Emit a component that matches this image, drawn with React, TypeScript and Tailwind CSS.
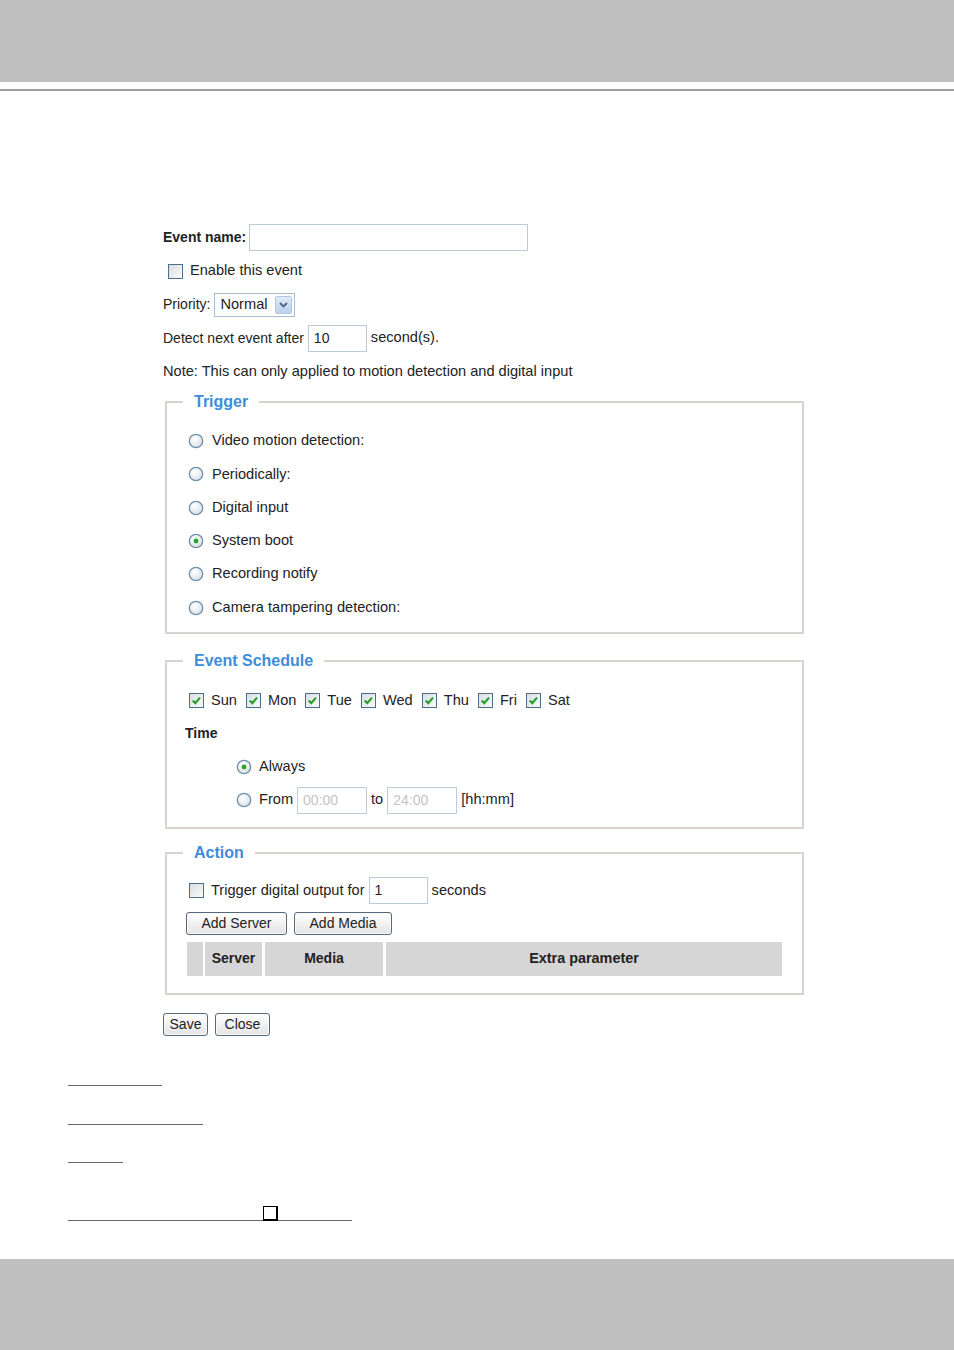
import React from "react";

const Checkbox = ({ checked = false }: { checked?: boolean }) => (
  <svg width="15" height="15" viewBox="0 0 15 15" className="shrink-0">
    <defs>
      <linearGradient id="cbg" x1="0" y1="0" x2="1" y2="1">
        <stop offset="0" stopColor="#d8dde2" />
        <stop offset="1" stopColor="#fbfbfb" />
      </linearGradient>
    </defs>
    <rect x="0.5" y="0.5" width="14" height="14" fill="url(#cbg)" stroke="#4e6d88" />
    {checked && (
      <path d="M3.8 7.6 L6.3 10.1 L11 4.6" fill="none" stroke="#23a023" strokeWidth="2.1" />
    )}
  </svg>
);

const Radio = ({ checked = false }: { checked?: boolean }) => (
  <svg width="16" height="16" viewBox="0 0 16 16" className="shrink-0">
    <defs>
      <radialGradient id="rbg" cx="0.4" cy="0.35" r="0.7">
        <stop offset="0" stopColor="#ffffff" />
        <stop offset="1" stopColor="#d9dfe5" />
      </radialGradient>
    </defs>
    <circle cx="8" cy="8" r="6.7" fill="url(#rbg)" stroke="#7190aa" strokeWidth="1.3" />
    {checked && <circle cx="8" cy="8" r="2.4" fill="#26a526" />}
  </svg>
);

const TextBox = ({
  value = "",
  w,
  disabled = false,
}: {
  value?: string;
  w: string;
  disabled?: boolean;
}) => (
  <div
    className={`${w} h-[27px] border border-[#bccbdb] bg-white flex items-center pl-[5px] text-[14px] ${
      disabled ? "text-[#c4c4c4]" : "text-[#222]"
    }`}
  >
    {value}
  </div>
);

const Button = ({ label, w }: { label: string; w: string }) => (
  <div
    className={`${w} h-[23px] rounded-[3px] border border-[#55697c] bg-gradient-to-b from-white to-[#e4e4e4] flex items-center justify-center text-[14px] text-[#222] shadow-[inset_0_0_0_1px_#fafafa]`}
  >
    {label}
  </div>
);

const Fieldset = ({
  title,
  className = "",
  children,
}: {
  title: string;
  className?: string;
  children: React.ReactNode;
}) => (
  <fieldset className={`ml-[2px] w-[639px] border-2 border-[#d6d4cd] ${className}`}>
    <legend className="ml-[16px] px-[11px] text-[16px] leading-[18px] font-bold text-[#3d8ddb]">
      {title}
    </legend>
    {children}
  </fieldset>
);

const Row = ({ children, className = "" }: { children: React.ReactNode; className?: string }) => (
  <div className={`flex items-center h-[33.3px] ${className}`}>{children}</div>
);

const triggers = [
  "Video motion detection:",
  "Periodically:",
  "Digital input",
  "System boot",
  "Recording notify",
  "Camera tampering detection:",
];

const days = ["Sun", "Mon", "Tue", "Wed", "Thu", "Fri", "Sat"];

export default function App() {
  return (
    <div className="flex flex-col h-[1350px] bg-white font-['Liberation_Sans',Arial,sans-serif] text-[14.6px] text-[#222]">
      <div className="h-[82px] bg-[#bfc0bf]" />
      <div className="h-[7px]" />
      <div className="h-[2px] bg-[#9f9f9f]" />

      <div className="flex-1 flex flex-col">
        <div className="ml-[163px] mt-[130px] flex flex-col">
          <div className="flex flex-col">
            <div className="flex items-center h-[33.5px] gap-[3px]">
              <span className="font-bold text-[14px]">Event name:</span>
              <TextBox w="w-[279px]" />
            </div>
            <div className="flex items-center h-[33.5px] pl-[5px] gap-[7px]">
              <Checkbox />
              <span>Enable this event</span>
            </div>
            <div className="flex items-center h-[33.5px] gap-[4px]">
              <span className="text-[14px]">Priority:</span>
              <div className="w-[81px] h-[24px] border border-[#a9bbd2] bg-white flex items-center pl-[5px] pr-[2px]">
                <span className="flex-1">Normal</span>
                <div className="w-[17px] h-[18px] rounded-[2px] border border-[#b5c8e2] bg-gradient-to-b from-[#dfe9f7] to-[#bcd0ee] flex items-center justify-center">
                  <svg width="9" height="6" viewBox="0 0 9 6">
                    <path d="M1 1 L4.5 4.5 L8 1" fill="none" stroke="#4d6185" strokeWidth="1.8" />
                  </svg>
                </div>
              </div>
            </div>
            <div className="flex items-center h-[33.5px] gap-[4px]">
              <span className="text-[14px]">Detect next event after</span>
              <TextBox value="10" w="w-[59px]" />
              <span>second(s).</span>
            </div>
            <div className="flex items-center h-[33.5px]">
              <span>Note: This can only applied to motion detection and digital input</span>
            </div>
          </div>

          <Fieldset title="Trigger" className="mt-[4px] pt-[14px] pb-[8px]">
            {triggers.map((t) => (
              <Row key={t} className="pl-[21px] gap-[8px]">
                <Radio checked={t === "System boot"} />
                <span>{t}</span>
              </Row>
            ))}
          </Fieldset>

          <Fieldset title="Event Schedule" className="mt-[18px] pt-[14px] pb-[11px]">
            <div className="flex items-center h-[33px] pl-[22px] gap-[9px]">
              {days.map((d) => (
                <div key={d} className="flex items-center gap-[7px]">
                  <Checkbox checked />
                  <span>{d}</span>
                </div>
              ))}
            </div>
            <div className="flex items-center h-[33px] pl-[18px]">
              <span className="font-bold text-[14px]">Time</span>
            </div>
            <div className="flex items-center h-[34px] pl-[69px] gap-[7px]">
              <Radio checked />
              <span>Always</span>
            </div>
            <div className="flex items-center h-[32px] pl-[69px] gap-[4px]">
              <Radio />
              <span className="ml-[3px]">From</span>
              <TextBox value="00:00" w="w-[70px]" disabled />
              <span>to</span>
              <TextBox value="24:00" w="w-[70px]" disabled />
              <span>[hh:mm]</span>
            </div>
          </Fieldset>

          <Fieldset title="Action" className="mt-[15px] pt-[12px] pb-[17px]">
            <Row className="pl-[22px] gap-[4px]">
              <Checkbox />
              <span className="ml-[3px]">Trigger digital output for</span>
              <TextBox value="1" w="w-[59px]" />
              <span>seconds</span>
            </Row>
            <div className="flex mt-[4px] ml-[19px] gap-[7px]">
              <Button label="Add Server" w="w-[101px]" />
              <Button label="Add Media" w="w-[98px]" />
            </div>
            <div className="flex mt-[7px] ml-[20px] mr-[20px] h-[34px] font-bold text-[14px]">
              <div className="w-[16px] bg-[#d6d6d6]" />
              <div className="ml-[2px] w-[57px] bg-[#d6d6d6] flex items-center justify-center">
                Server
              </div>
              <div className="ml-[3px] w-[118px] bg-[#d6d6d6] flex items-center justify-center">
                Media
              </div>
              <div className="ml-[3px] flex-1 bg-[#d6d6d6] flex items-center justify-center text-[14.4px]">
                Extra parameter
              </div>
            </div>
          </Fieldset>

          <div className="flex mt-[18px] gap-[7px]">
            <Button label="Save" w="w-[45px]" />
            <Button label="Close" w="w-[55px]" />
          </div>
        </div>

        <div className="ml-[68px] mt-[49px] flex flex-col">
          <div className="w-[94px] h-[1.5px] bg-[#666]" />
          <div className="mt-[37.5px] w-[135px] h-[1.5px] bg-[#666]" />
          <div className="mt-[36.5px] w-[55px] h-[1.5px] bg-[#666]" />
          <div className="mt-[43px] w-[284px] flex items-end">
            <div className="w-[195px] h-[1.5px] bg-[#666]" />
            <div className="w-[15px] h-[15px] border border-black border-r-2 border-b-2 bg-white" />
            <div className="flex-1 h-[1.5px] bg-[#666]" />
          </div>
        </div>
      </div>

      <div className="h-[91px] bg-[#bfc0bf]" />
    </div>
  );
}
